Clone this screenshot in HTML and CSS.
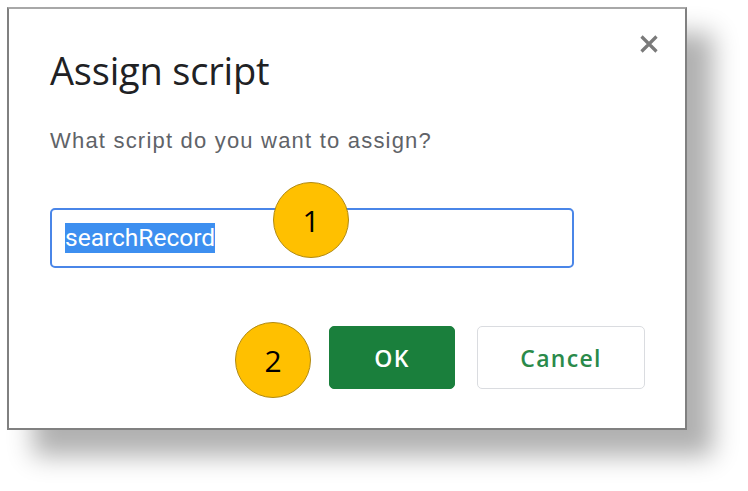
FILE: index.html
```html
<!DOCTYPE html>
<html lang="en">
<head>
    <meta charset="UTF-8">
    <title>Assign script</title>
    <link rel="stylesheet" href="styles.css">
</head>
<body>
    <div class="dialog">
        <div class="dialog-head">
            <h1 class="title">Assign script</h1>
            <span class="close" aria-label="Close">
                <svg width="18" height="18" viewBox="0 0 18 18">
                    <path d="M1.5 1.5 L16.5 16.5 M16.5 1.5 L1.5 16.5" stroke="#7a7a7a" stroke-width="3.2"/>
                </svg>
            </span>
        </div>
        <p class="prompt">What script do you want to assign?</p>
        <div class="field">
            <span class="value">searchRecord</span>
            <span class="callout callout-one">1</span>
        </div>
        <div class="actions">
            <span class="callout callout-two">2</span>
            <button class="btn btn-ok">OK</button>
            <button class="btn btn-cancel">Cancel</button>
        </div>
    </div>
</body>
</html>
```

FILE: styles.css
```css
body {
    margin: 0;
    padding-bottom: 61px;
    background: #fff;
    font-family: Roboto, "Liberation Sans", Arial, sans-serif;
}
.dialog {
    box-sizing: border-box;
    width: 680px;
    height: 423px;
    margin: 7px 0 0 7px;
    padding: 0 27px 0 41px;
    background: #fff;
    border: 2px solid #808080;
    border-top-color: #a8a8a8;
    box-shadow: 26px 26px 24px rgba(0, 0, 0, 0.31);
}
.dialog-head {
    display: flex;
    justify-content: space-between;
    align-items: flex-start;
    padding-top: 26px;
}
.title {
    margin: 12px 0 0;
    font-family: "Open Sans", sans-serif;
    font-weight: 400;
    font-size: 38px;
    line-height: 46px;
    color: #202124;
    letter-spacing: -0.2px;
}
.close {
    display: block;
    width: 18px;
    height: 18px;
}
.prompt {
    margin: 36px 0 0;
    font-family: "Liberation Sans", Arial, sans-serif;
    font-size: 22px;
    line-height: 24px;
    color: #5f6368;
    letter-spacing: 1.2px;
}
.field {
    position: relative;
    box-sizing: border-box;
    width: 524px;
    height: 60px;
    margin-top: 55px;
    padding: 0 13px;
    display: flex;
    align-items: center;
    border: 2px solid #4a86e8;
    border-radius: 5px;
}
.value {
    background: #3d8ff0;
    color: #fff;
    font-size: 24.5px;
    line-height: 30px;
}
.callout {
    box-sizing: border-box;
    width: 76px;
    height: 76px;
    display: flex;
    align-items: center;
    justify-content: center;
    border-radius: 50%;
    background: #ffc000;
    border: 1.5px solid #b08a14;
    color: #000;
    font-family: "Open Sans", sans-serif;
    font-size: 30px;
}
.callout-one {
    position: absolute;
    left: 221px;
    top: -28px;
}
.actions {
    display: flex;
    justify-content: flex-end;
    align-items: flex-start;
    gap: 22px;
    margin: 54px 13px 0 0;
}
.callout-two {
    margin-right: -4px;
}
.btn {
    height: 63px;
    margin-top: 4px;
    border-radius: 5px;
    font-family: "Open Sans", sans-serif;
    font-weight: 600;
    font-size: 23px;
    letter-spacing: 1.3px;
    cursor: pointer;
}
.btn-ok {
    width: 126px;
    background: #1a7f3c;
    border: 1px solid #1a7f3c;
    color: #fff;
}
.btn-cancel {
    width: 168px;
    background: #fff;
    border: 1px solid #dadce0;
    color: #2a8a4a;
}
```
